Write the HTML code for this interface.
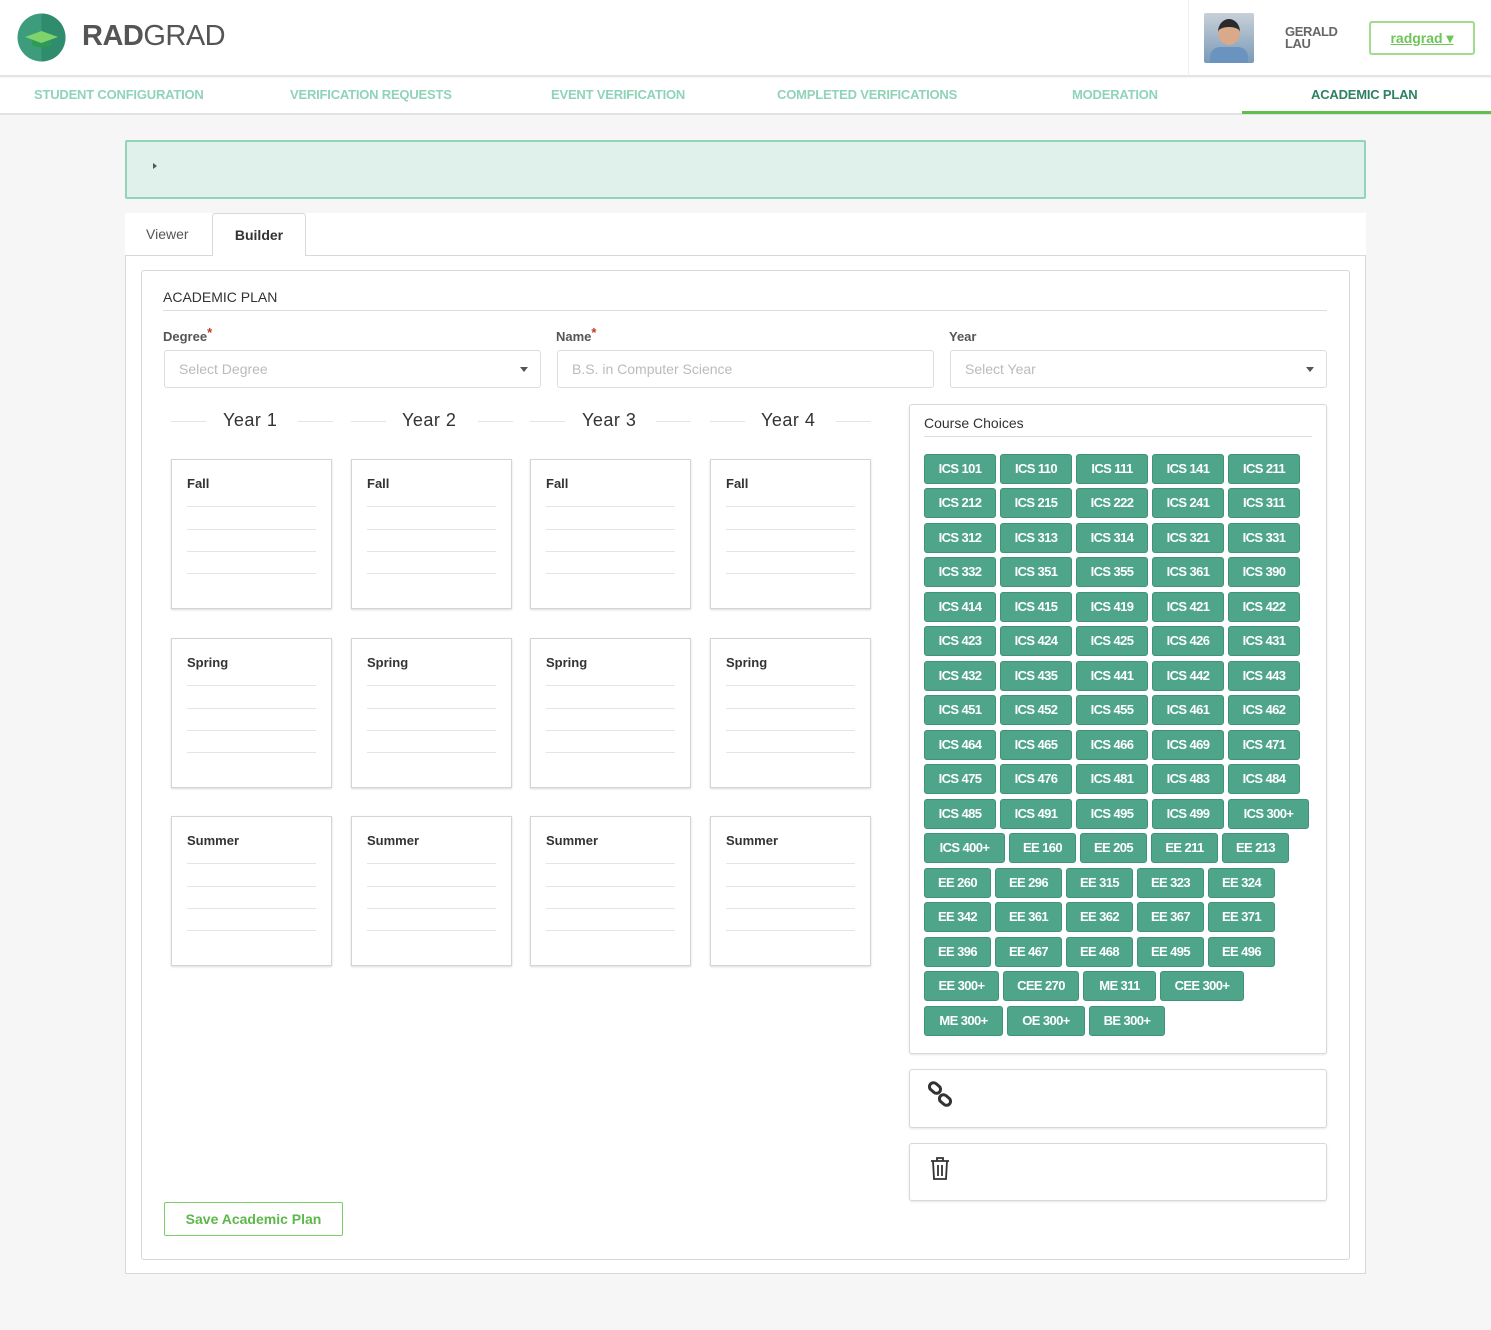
<!DOCTYPE html>
<html><head><meta charset="utf-8"><style>
*{box-sizing:border-box;margin:0;padding:0}
body{width:1491px;height:1330px;background:#f6f6f6;font-family:"Liberation Sans",sans-serif;position:relative;overflow:hidden;color:#333}
.a{position:absolute}
.hdr{left:0;top:0;width:1491px;height:77px;background:#fff;border-bottom:2px solid #e4e4e4}
.nav{left:0;top:78px;width:1491px;height:37px;background:#fff;border-bottom:2px solid #e2e2e2}
.nav span{position:absolute;top:9px;font-size:13px;font-weight:bold;color:#8fd3b8;letter-spacing:-0.2px}
.box{background:#fff;border:1px solid #d8d8d8;border-radius:3px}
.sem{background:#fff;border:1px solid #d4d4d4;box-shadow:0 1px 2px rgba(0,0,0,.15);width:161px;height:150px}
.sem b{position:absolute;left:15px;top:16px;font-size:13px;color:#333}
.sem i{position:absolute;left:15px;right:15px;height:1px;background:#e4e4e4}
.yr{font-size:18px;color:#333;top:410px;letter-spacing:.5px}
.yl{height:1px;background:#e4e4e4;top:421px}
.row{position:absolute;left:924px;display:flex;gap:4px}
.row div{height:30px;background:#4fa58a;border:1px solid #3f9478;border-radius:3px;color:#fff;font-weight:bold;font-size:13px;text-align:center;line-height:28px;letter-spacing:-0.6px;width:72px}
.lbl{font-size:13px;font-weight:bold;color:#555;top:329px}
.lbl span{color:#c0392b;font-size:13px;position:relative;top:-4px}
.inp{top:350px;height:38px;width:377px;background:#fff;border:1px solid #ddd;border-radius:3px;font-size:14px;color:#bbb;padding:10px 14px}
.caret{position:absolute;right:12px;top:16px;border:4px solid transparent;border-top:5px solid #555}
</style></head><body>
<div class="a hdr">
 <svg class="a" style="left:17px;top:13px" width="49" height="49" viewBox="0 0 49 49"><circle cx="24.5" cy="24.5" r="24" fill="#3d9c7c"/><path d="M24.5 .5A24 24 0 0 1 24.5 48.5Z" fill="#2f8c6c"/><path d="M8 24 L24.5 18 L41 24 L24.5 30Z" fill="#7ed46a"/><path d="M15 27 v5 q9.5 5 19 0 v-5 l-9.5 3.5Z" fill="#2d9b52"/></svg>
 <div class="a" style="left:82px;top:20px;font-size:29px;color:#555;letter-spacing:-0.5px"><b style="font-weight:bold">RAD</b>GRAD</div>
 <div class="a" style="left:1188px;top:0;width:1px;height:77px;background:#eee"></div>
 <div class="a" style="left:1204px;top:13px;width:50px;height:50px;background:linear-gradient(#c8d0d8,#7a9ab8);border-radius:2px"><div class="a" style="left:14px;top:6px;width:22px;height:26px;border-radius:50%;background:#d9a98a;border-top:8px solid #2a2a2a"></div><div class="a" style="left:6px;top:34px;width:38px;height:16px;background:#6b93bf;border-radius:10px 10px 0 0"></div></div>
 <div class="a" style="left:1285px;top:26px;font-size:13px;font-weight:bold;color:#666;line-height:12px;letter-spacing:-0.4px">GERALD<br>LAU</div>
 <div class="a" style="left:1369px;top:21px;width:106px;height:34px;border:2px solid #9fdc8f;border-radius:3px;text-align:center;line-height:31px;font-size:14px;font-weight:bold;color:#6dc55a;text-decoration:underline">radgrad ▾</div>
</div>
<div class="a nav">
 <span style="left:34px">STUDENT CONFIGURATION</span>
 <span style="left:290px">VERIFICATION REQUESTS</span>
 <span style="left:551px">EVENT VERIFICATION</span>
 <span style="left:777px">COMPLETED VERIFICATIONS</span>
 <span style="left:1072px">MODERATION</span>
 <span style="left:1311px;color:#2e8066">ACADEMIC PLAN</span>
 <div class="a" style="left:1242px;top:33px;width:249px;height:3px;background:#5cc04a"></div>
</div>
<div class="a" style="left:125px;top:140px;width:1241px;height:59px;background:#dff1ea;border:2px solid #93d4b8;border-radius:2px"><div class="a" style="left:26px;top:21px;border:3px solid transparent;border-left:4px solid #555"></div></div>
<div class="a" style="left:125px;top:213px;width:1241px;height:43px;background:#fff;border-bottom:1px solid #d8d8d8"></div>
<div class="a" style="left:146px;top:226px;font-size:14px;color:#555">Viewer</div>
<div class="a" style="left:212px;top:213px;width:94px;height:44px;background:#fff;border:1px solid #d8d8d8;border-bottom:none;border-radius:3px 3px 0 0;text-align:center;line-height:42px;font-size:14px;font-weight:bold">Builder</div>
<div class="a" style="left:125px;top:256px;width:1241px;height:1018px;background:#fff;border:1px solid #d8d8d8;border-top:none"></div>
<div class="a box" style="left:141px;top:270px;width:1209px;height:990px"></div>
<div class="a" style="left:163px;top:289px;font-size:14px;color:#333">ACADEMIC PLAN</div>
<div class="a" style="left:163px;top:310px;width:1164px;height:1px;background:#ddd"></div>
<div class="a lbl" style="left:163px">Degree<span>*</span></div>
<div class="a lbl" style="left:556px">Name<span>*</span></div>
<div class="a lbl" style="left:949px">Year</div>
<div class="a inp" style="left:164px">Select Degree<div class="caret"></div></div>
<div class="a inp" style="left:557px">B.S. in Computer Science</div>
<div class="a inp" style="left:950px">Select Year<div class="caret"></div></div>

<div class="a yl" style="left:171px;width:35px"></div><div class="a yr" style="left:223px">Year 1</div><div class="a yl" style="left:298px;width:35px"></div>
<div class="a yl" style="left:351px;width:35px"></div><div class="a yr" style="left:402px">Year 2</div><div class="a yl" style="left:478px;width:35px"></div>
<div class="a yl" style="left:530px;width:35px"></div><div class="a yr" style="left:582px">Year 3</div><div class="a yl" style="left:656px;width:35px"></div>
<div class="a yl" style="left:710px;width:35px"></div><div class="a yr" style="left:761px">Year 4</div><div class="a yl" style="left:836px;width:35px"></div>

<div class="a sem" style="left:171px;top:459px"><b>Fall</b><i style="top:46px"></i><i style="top:69px"></i><i style="top:91px"></i><i style="top:113px"></i></div>
<div class="a sem" style="left:351px;top:459px"><b>Fall</b><i style="top:46px"></i><i style="top:69px"></i><i style="top:91px"></i><i style="top:113px"></i></div>
<div class="a sem" style="left:530px;top:459px"><b>Fall</b><i style="top:46px"></i><i style="top:69px"></i><i style="top:91px"></i><i style="top:113px"></i></div>
<div class="a sem" style="left:710px;top:459px"><b>Fall</b><i style="top:46px"></i><i style="top:69px"></i><i style="top:91px"></i><i style="top:113px"></i></div>
<div class="a sem" style="left:171px;top:638px"><b>Spring</b><i style="top:46px"></i><i style="top:69px"></i><i style="top:91px"></i><i style="top:113px"></i></div>
<div class="a sem" style="left:351px;top:638px"><b>Spring</b><i style="top:46px"></i><i style="top:69px"></i><i style="top:91px"></i><i style="top:113px"></i></div>
<div class="a sem" style="left:530px;top:638px"><b>Spring</b><i style="top:46px"></i><i style="top:69px"></i><i style="top:91px"></i><i style="top:113px"></i></div>
<div class="a sem" style="left:710px;top:638px"><b>Spring</b><i style="top:46px"></i><i style="top:69px"></i><i style="top:91px"></i><i style="top:113px"></i></div>
<div class="a sem" style="left:171px;top:816px"><b>Summer</b><i style="top:46px"></i><i style="top:69px"></i><i style="top:91px"></i><i style="top:113px"></i></div>
<div class="a sem" style="left:351px;top:816px"><b>Summer</b><i style="top:46px"></i><i style="top:69px"></i><i style="top:91px"></i><i style="top:113px"></i></div>
<div class="a sem" style="left:530px;top:816px"><b>Summer</b><i style="top:46px"></i><i style="top:69px"></i><i style="top:91px"></i><i style="top:113px"></i></div>
<div class="a sem" style="left:710px;top:816px"><b>Summer</b><i style="top:46px"></i><i style="top:69px"></i><i style="top:91px"></i><i style="top:113px"></i></div>

<div class="a box" style="left:909px;top:404px;width:418px;height:650px;box-shadow:0 1px 2px rgba(0,0,0,.1)"></div>
<div class="a" style="left:924px;top:415px;font-size:14px;color:#333">Course Choices</div>
<div class="a" style="left:924px;top:436px;width:388px;height:1px;background:#ddd"></div>
<div class="row" style="top:454px"><div>ICS 101</div><div>ICS 110</div><div>ICS 111</div><div>ICS 141</div><div>ICS 211</div></div>
<div class="row" style="top:488px"><div>ICS 212</div><div>ICS 215</div><div>ICS 222</div><div>ICS 241</div><div>ICS 311</div></div>
<div class="row" style="top:523px"><div>ICS 312</div><div>ICS 313</div><div>ICS 314</div><div>ICS 321</div><div>ICS 331</div></div>
<div class="row" style="top:557px"><div>ICS 332</div><div>ICS 351</div><div>ICS 355</div><div>ICS 361</div><div>ICS 390</div></div>
<div class="row" style="top:592px"><div>ICS 414</div><div>ICS 415</div><div>ICS 419</div><div>ICS 421</div><div>ICS 422</div></div>
<div class="row" style="top:626px"><div>ICS 423</div><div>ICS 424</div><div>ICS 425</div><div>ICS 426</div><div>ICS 431</div></div>
<div class="row" style="top:661px"><div>ICS 432</div><div>ICS 435</div><div>ICS 441</div><div>ICS 442</div><div>ICS 443</div></div>
<div class="row" style="top:695px"><div>ICS 451</div><div>ICS 452</div><div>ICS 455</div><div>ICS 461</div><div>ICS 462</div></div>
<div class="row" style="top:730px"><div>ICS 464</div><div>ICS 465</div><div>ICS 466</div><div>ICS 469</div><div>ICS 471</div></div>
<div class="row" style="top:764px"><div>ICS 475</div><div>ICS 476</div><div>ICS 481</div><div>ICS 483</div><div>ICS 484</div></div>
<div class="row" style="top:799px"><div>ICS 485</div><div>ICS 491</div><div>ICS 495</div><div>ICS 499</div><div style="width:81px">ICS 300+</div></div>
<div class="row" style="top:833px"><div style="width:81px">ICS 400+</div><div style="width:67px">EE 160</div><div style="width:67px">EE 205</div><div style="width:67px">EE 211</div><div style="width:67px">EE 213</div></div>
<div class="row" style="top:868px"><div style="width:67px">EE 260</div><div style="width:67px">EE 296</div><div style="width:67px">EE 315</div><div style="width:67px">EE 323</div><div style="width:67px">EE 324</div></div>
<div class="row" style="top:902px"><div style="width:67px">EE 342</div><div style="width:67px">EE 361</div><div style="width:67px">EE 362</div><div style="width:67px">EE 367</div><div style="width:67px">EE 371</div></div>
<div class="row" style="top:937px"><div style="width:67px">EE 396</div><div style="width:67px">EE 467</div><div style="width:67px">EE 468</div><div style="width:67px">EE 495</div><div style="width:67px">EE 496</div></div>
<div class="row" style="top:971px"><div style="width:75px">EE 300+</div><div style="width:76px">CEE 270</div><div style="width:73px">ME 311</div><div style="width:84px">CEE 300+</div></div>
<div class="row" style="top:1006px"><div style="width:79px">ME 300+</div><div style="width:78px">OE 300+</div><div style="width:76px">BE 300+</div></div>

<div class="a box" style="left:909px;top:1069px;width:418px;height:59px;box-shadow:0 1px 2px rgba(0,0,0,.1)"></div>
<svg class="a" style="left:926px;top:1080px" width="30" height="30" viewBox="0 0 30 30"><g fill="none" stroke="#333" stroke-width="3"><rect x="3" y="4" width="12" height="8" rx="4" transform="rotate(40 9 8)"/><rect x="13" y="16" width="12" height="8" rx="4" transform="rotate(40 19 20)"/></g></svg>
<div class="a box" style="left:909px;top:1143px;width:418px;height:58px;box-shadow:0 1px 2px rgba(0,0,0,.1)"></div>
<svg class="a" style="left:929px;top:1156px" width="22" height="26" viewBox="0 0 22 26"><g fill="none" stroke="#333" stroke-width="1.8"><path d="M2 5h18M8 5V2h6v3M4 5l1 18h12l1-18M9 9v11M13 9v11"/></g></svg>
<div class="a" style="left:164px;top:1202px;width:179px;height:34px;border:1px solid #7ccc6a;border-radius:2px;text-align:center;line-height:32px;font-size:14px;font-weight:bold;color:#5cb84a">Save Academic Plan</div>
</body></html>
